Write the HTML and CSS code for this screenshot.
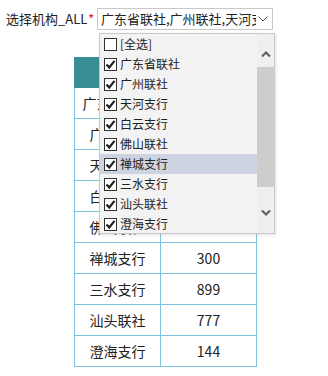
FILE: index.html
```html
<!DOCTYPE html>
<html lang="zh-CN">
<head>
    <meta charset="UTF-8">
    <title>机构选择</title>
    <link rel="stylesheet" href="styles.css">
</head>
<body>

<div class="filter">
    <label class="filter-label">选择机构_ALL<span class="req">*</span></label>
    <div class="combo">
        <div class="combo-box">
            <span class="combo-text">广东省联社,广州联社,天河支行,白云支行,佛山联社,禅城支行,三水支行,汕头联社,澄海支行</span>
            <svg class="combo-arrow" width="10" height="6" viewBox="0 0 10 6">
                <polyline points="0.5,0.5 5,5 9.5,0.5" fill="none" stroke="#555" stroke-width="1"/>
            </svg>
        </div>
        <div class="combo-list">
            <ul class="options">
                <li><span class="check"></span>[全选]</li>
                <li><span class="check on"></span>广东省联社</li>
                <li><span class="check on"></span>广州联社</li>
                <li><span class="check on"></span>天河支行</li>
                <li><span class="check on"></span>白云支行</li>
                <li><span class="check on"></span>佛山联社</li>
                <li class="active"><span class="check on"></span>禅城支行</li>
                <li><span class="check on"></span>三水支行</li>
                <li><span class="check on"></span>汕头联社</li>
                <li><span class="check on"></span>澄海支行</li>
            </ul>
            <div class="scrollbar">
                <svg class="sb-arrow sb-up" width="10" height="8" viewBox="0 0 10 8">
                    <polyline points="1,6.5 5,2.5 9,6.5" fill="none" stroke="#606060" stroke-width="2.2"/>
                </svg>
                <div class="sb-track"><div class="sb-thumb"></div></div>
                <svg class="sb-arrow sb-down" width="10" height="8" viewBox="0 0 10 8">
                    <polyline points="1,1.5 5,5.5 9,1.5" fill="none" stroke="#606060" stroke-width="2.2"/>
                </svg>
            </div>
        </div>
    </div>
</div>

<table class="grid">
    <thead>
        <tr><th>机构</th><th>金额</th></tr>
    </thead>
    <tbody>
        <tr><td>广东省联社</td><td>520</td></tr>
        <tr><td>广州联社</td><td>410</td></tr>
        <tr><td>天河支行</td><td>233</td></tr>
        <tr><td>白云支行</td><td>168</td></tr>
        <tr><td>佛山联社</td><td>650</td></tr>
        <tr><td>禅城支行</td><td>300</td></tr>
        <tr><td>三水支行</td><td>899</td></tr>
        <tr><td>汕头联社</td><td>777</td></tr>
        <tr><td>澄海支行</td><td>144</td></tr>
    </tbody>
</table>

<script>
    // 勾选框里的对勾
    document.querySelectorAll('.check.on').forEach(function (box) {
        box.innerHTML = '<svg width="11" height="11" viewBox="0 0 11 11"><polyline points="1.5,5.5 4.3,8.5 9.5,1.8" fill="none" stroke="#222" stroke-width="2.2"/></svg>';
    });
</script>

</body>
</html>
```

FILE: styles.css
```css
body {
    margin: 0;
    font-family: 'Noto Sans CJK SC', 'Noto Sans', sans-serif;
    font-size: 14px;
    line-height: 20px;
    color: #222;
    background: #fff;
}
.filter {
    display: flex;
    align-items: center;
    padding: 8px 0 0 6px;
}
.filter-label {
    flex: none;
    width: 91px;
    white-space: nowrap;
    font-size: 13px;
    line-height: 22px;
}
.req {
    color: #e02020;
    margin-left: 1px;
}
.combo {
    position: relative;
}
.combo-box {
    box-sizing: border-box;
    width: 176px;
    height: 22px;
    border: 1px solid #c8c8c8;
    display: flex;
    align-items: center;
    padding: 0 4px 0 3px;
    background: #fff;
}
.combo-text {
    flex: 1;
    overflow: hidden;
    white-space: nowrap;
    font-size: 13px;
    line-height: 20px;
}
.combo-arrow {
    margin-left: 2px;
}
.combo-list {
    position: absolute;
    top: 25px;
    left: 2px;
    box-sizing: border-box;
    width: 176px;
    height: 201px;
    border: 1px solid #c9c9c9;
    background: #f3f3f3;
    display: flex;
    overflow: hidden;
    box-shadow: 1px 1px 3px rgba(0, 0, 0, 0.12);
    z-index: 2;
}
.options {
    list-style: none;
    margin: 0;
    padding: 0;
    flex: 1;
}
.options li {
    height: 20px;
    line-height: 20px;
    font-size: 12px;
    display: flex;
    align-items: center;
    padding-left: 4px;
    white-space: nowrap;
}
.options li.active {
    background: #cdd3e0;
}
.check {
    box-sizing: border-box;
    width: 13px;
    height: 13px;
    border: 1px solid #333;
    background: #fff;
    margin-right: 3px;
    display: flex;
    align-items: center;
    justify-content: center;
}
.scrollbar {
    width: 17px;
    background: #efefef;
    display: flex;
    flex-direction: column;
    align-items: center;
}
.sb-up {
    flex: none;
    margin: 16px 0 9px;
}
.sb-down {
    flex: none;
    margin: 0 0 16px;
}
.sb-track {
    flex: 1;
    width: 100%;
}
.sb-thumb {
    height: 120px;
    background: #cdcdcd;
}
.grid {
    border-collapse: collapse;
    margin: 27px 0 0 74px;
}
.grid th,
.grid td {
    height: 30px;
    padding: 0;
    text-align: center;
    font-weight: normal;
    line-height: 20px;
}
.grid th {
    background: #3a8f97;
    color: #fff;
    border: 1px solid #3a8f97;
    height: 29px;
}
.grid td {
    border: 1px solid #7fc3e0;
}
.grid td:first-child {
    width: 85px;
}
.grid td:last-child {
    width: 95px;
}
```
